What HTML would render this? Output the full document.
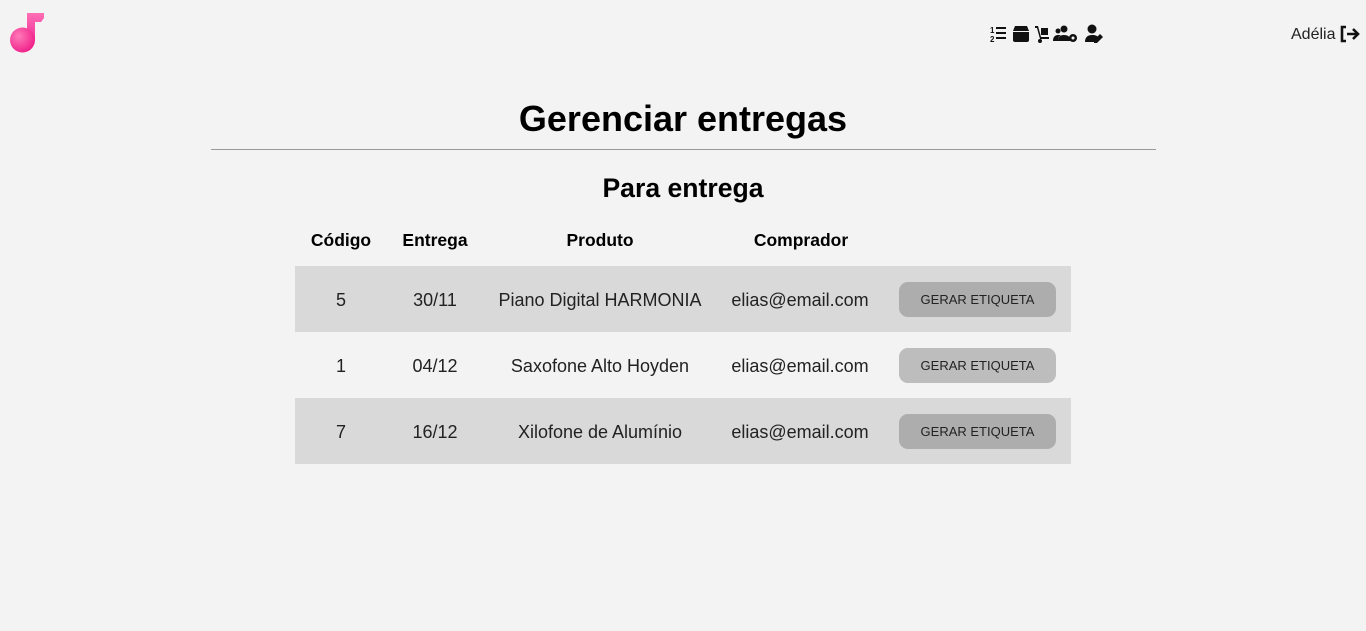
<!DOCTYPE html>
<html><head><meta charset="utf-8"><style>
body{margin:0;width:1366px;height:631px;background:#f3f3f3;font-family:"Liberation Sans",Arial,sans-serif;position:relative;overflow:hidden;color:#000}
.a{position:absolute}
h1{position:absolute;left:0;width:1366px;top:98px;margin:0;text-align:center;font-size:36px;font-weight:bold}
.hr{position:absolute;left:211px;width:945px;top:149px;height:1px;background:#999}
h2{position:absolute;left:0;width:1366px;top:173px;margin:0;text-align:center;font-size:26.6px;font-weight:bold}
.th{position:absolute;top:230px;font-size:17.5px;font-weight:bold;text-align:center;transform:translateX(-50%);white-space:nowrap}
.row{position:absolute;left:295px;width:776px;height:66px}
.c{position:absolute;top:1px;line-height:66px;font-size:18px;color:#222;transform:translateX(-50%);white-space:nowrap}
.btn{position:absolute;left:604px;top:16px;width:157px;height:35px;border-radius:9px;font-size:13px;line-height:35px;text-align:center;color:#222}
</style></head><body>
<svg class="a" style="left:9px;top:12px" width="38" height="42" viewBox="0 0 38 42">
<defs><radialGradient id="g" cx="0.35" cy="0.35" r="0.7"><stop offset="0" stop-color="#ff7ab8"/><stop offset="1" stop-color="#f0208a"/></radialGradient>
<linearGradient id="h" x1="0" y1="0" x2="0" y2="1"><stop offset="0" stop-color="#ff6fb5"/><stop offset="1" stop-color="#f0309a"/></linearGradient></defs>
<path d="M18 1h17v5l-3 4h-6v18h-8z" fill="url(#h)"/>
<circle cx="13.5" cy="28" r="12.5" fill="url(#g)"/></svg>
<svg class="a" style="left:990px;top:24px" width="120" height="20" viewBox="0 0 120 20" fill="#111">
<text x="0" y="9" font-size="8" font-weight="bold" font-family="Liberation Sans">1</text><text x="0" y="18" font-size="8" font-weight="bold" font-family="Liberation Sans">2</text>
<rect x="6" y="3" width="10" height="2"/><rect x="6" y="8" width="10" height="2"/><rect x="6" y="13" width="10" height="2"/>
<path d="M25 2h12l2 5v9a2 2 0 0 1-2 2h-12a2 2 0 0 1-2-2v-9z"/><rect x="23" y="7" width="16" height="1" fill="#f3f3f3"/>
<path d="M45 2h3l3 11h8v2h-9l-3-11h-2z"/><rect x="51" y="4" width="7" height="7"/><circle cx="50" cy="17" r="2"/>
<circle cx="74" cy="5" r="3.5"/><circle cx="68" cy="7" r="2.5"/><path d="M63 17c0-4 2-6 5-6h3c-2 1-3 3-3 6z"/><path d="M68 17c0-4 2-6 6-6s6 2 6 4v2z"/><circle cx="83" cy="14" r="4"/><circle cx="83" cy="14" r="1.5" fill="#f3f3f3"/>
<circle cx="102" cy="5" r="4.5"/><path d="M95 18c0-5 3-7 7-7s5 1 6 2l-4 5z"/><path d="M110 10l3 3-6 6h-3v-3z"/>
</svg>
<div class="a" style="left:1291px;top:26px;font-size:16px;color:#222">Adélia</div>
<svg class="a" style="left:1340px;top:25px" width="20" height="18" viewBox="0 0 20 18" fill="none" stroke="#111" stroke-width="2.6"><path d="M6 2H2v14h4"/><path d="M7 9h10M13 4l5 5-5 5"/></svg>
<h1>Gerenciar entregas</h1>
<div class="hr"></div>
<h2>Para entrega</h2>
<div class="th" style="left:341px">Código</div>
<div class="th" style="left:435px">Entrega</div>
<div class="th" style="left:600px">Produto</div>
<div class="th" style="left:801px">Comprador</div>
<div class="row" style="top:266px;background:#d9d9d9"><div class="c" style="left:46px">5</div><div class="c" style="left:140px">30/11</div><div class="c" style="left:305px">Piano Digital HARMONIA</div><div class="c" style="left:505px">elias@email.com</div><div class="btn" style="background:#adadad">GERAR ETIQUETA</div></div>
<div class="row" style="top:332px"><div class="c" style="left:46px">1</div><div class="c" style="left:140px">04/12</div><div class="c" style="left:305px">Saxofone Alto Hoyden</div><div class="c" style="left:505px">elias@email.com</div><div class="btn" style="background:#bdbdbd">GERAR ETIQUETA</div></div>
<div class="row" style="top:398px;background:#d9d9d9"><div class="c" style="left:46px">7</div><div class="c" style="left:140px">16/12</div><div class="c" style="left:305px">Xilofone de Alumínio</div><div class="c" style="left:505px">elias@email.com</div><div class="btn" style="background:#adadad">GERAR ETIQUETA</div></div>
</body></html>
